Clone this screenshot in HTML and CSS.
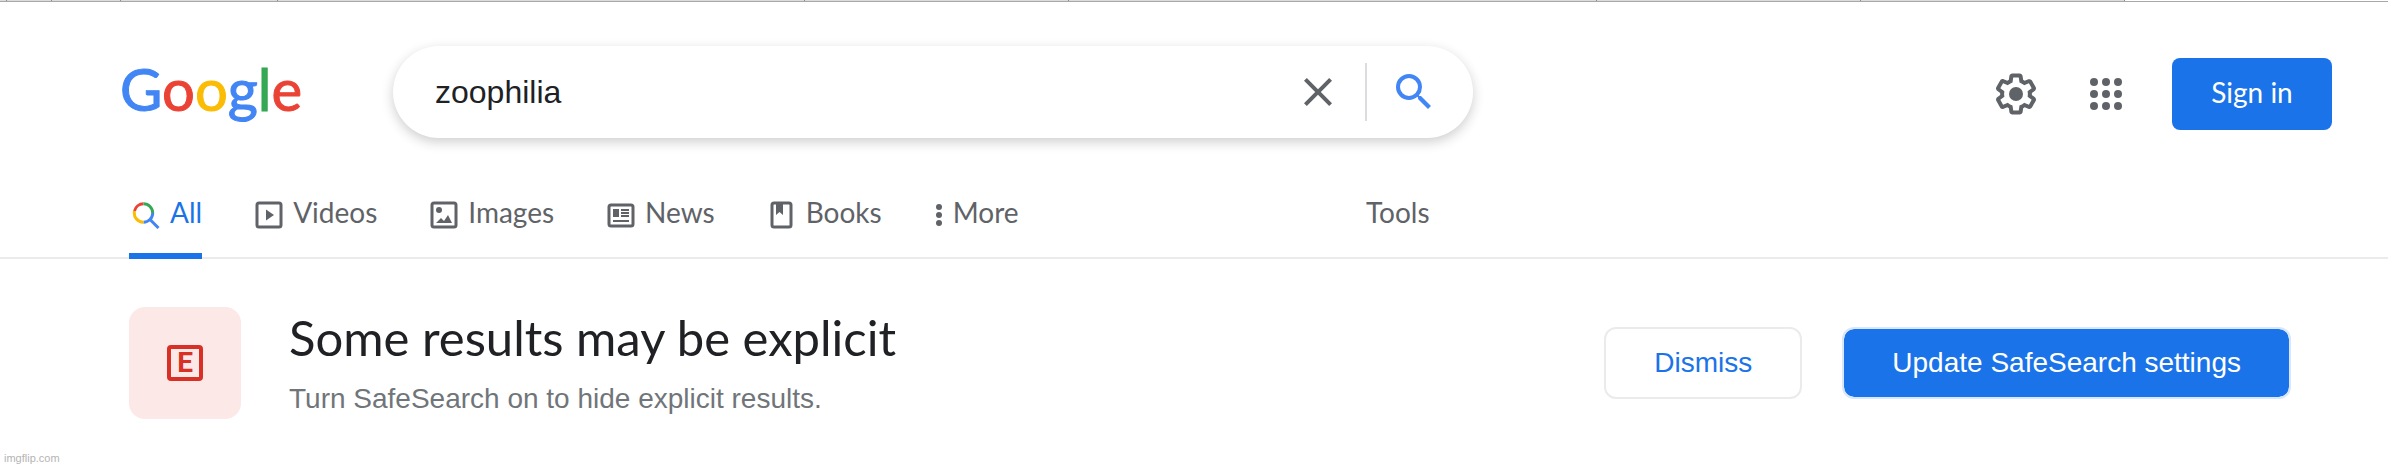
FILE: index.html
```html
<!DOCTYPE html>
<html lang="en">
<head>
  <meta charset="UTF-8">
  <meta name="viewport" content="width=device-width, initial-scale=1.0">
  <title>zoophilia - Google Search</title>
  <link rel="stylesheet" href="styles.css">
</head>
<body>
  <!-- Edge of the browser tab bar -->
  <div class="top-strip">
    <span class="slot tiny"></span>
    <span class="slot small"></span>
    <span class="slot medium"></span>
    <span class="slot large"></span>
    <span class="slot wide"></span>
    <span class="slot"></span>
    <span class="slot wide"></span>
    <span class="slot"></span>
    <span class="slot"></span>
    <span class="slot empty"></span>
  </div>

  <!-- Header: logo, search box, account -->
  <header class="header">
    <a class="logo" href="#" aria-label="Google"><span class="blue">G</span><span class="red">o</span><span class="yellow">o</span><span class="blue">g</span><span class="green">l</span><span class="red">e</span></a>

    <form class="search-box" role="search">
      <input class="search-input" type="text" aria-label="Search" value="zoophilia">
      <button class="icon-button" type="reset" aria-label="Clear">
        <svg viewBox="0 0 24 24"><path d="M19 6.41L17.59 5 12 10.59 6.41 5 5 6.41 10.59 12 5 17.59 6.41 19 12 13.41 17.59 19 19 17.59 13.41 12z"/></svg>
      </button>
      <span class="divider"></span>
      <button class="icon-button search-button" type="submit" aria-label="Search">
        <svg viewBox="0 0 24 24"><path d="M15.5 14h-.79l-.28-.27A6.47 6.47 0 0 0 16 9.5 6.5 6.5 0 1 0 9.5 16c1.61 0 3.09-.59 4.23-1.57l.27.28v.79l5 4.99L20.49 19l-4.99-5zm-6 0a4.5 4.5 0 1 1 0-9 4.5 4.5 0 0 1 0 9z"/></svg>
      </button>
    </form>

    <div class="account">
      <button class="icon-button" type="button" aria-label="Settings">
        <svg viewBox="0 0 24 24"><path d="M13.85 22.25h-3.7c-.74 0-1.36-.54-1.45-1.27l-.27-1.89c-.27-.14-.53-.29-.79-.46l-1.8.72c-.7.26-1.47-.03-1.81-.65L2.2 15.53c-.35-.66-.2-1.44.36-1.88l1.53-1.19c-.01-.15-.02-.3-.02-.46 0-.15.01-.31.02-.46l-1.52-1.19c-.59-.45-.74-1.26-.37-1.88l1.85-3.19c.34-.62 1.11-.9 1.79-.63l1.81.73c.26-.17.52-.32.78-.46l.27-1.91c.09-.7.71-1.25 1.44-1.25h3.7c.74 0 1.36.54 1.45 1.27l.27 1.89c.27.14.53.29.79.46l1.8-.72c.71-.26 1.48.03 1.82.65l1.84 3.18c.36.66.2 1.44-.36 1.88l-1.52 1.19c.01.15.02.3.02.46s-.01.31-.02.46l1.52 1.19c.56.45.72 1.23.37 1.86l-1.86 3.22c-.34.62-1.11.9-1.8.63l-1.8-.72c-.26.17-.52.32-.78.46l-.27 1.91c-.1.68-.72 1.22-1.46 1.22zm-3.23-2h2.76l.37-2.55.53-.22c.44-.18.88-.44 1.34-.78l.45-.34 2.38.96 1.38-2.4-2.03-1.58.07-.56c.03-.26.06-.51.06-.78s-.03-.53-.06-.78l-.07-.56 2.03-1.58-1.39-2.4-2.39.96-.45-.35c-.42-.32-.87-.58-1.33-.77l-.52-.22-.37-2.55h-2.76l-.37 2.55-.53.21c-.44.19-.88.44-1.34.79l-.45.33-2.38-.95-1.39 2.39 2.03 1.58-.07.56a7 7 0 0 0-.06.79c0 .26.02.53.06.78l.07.56-2.03 1.58 1.38 2.4 2.39-.96.45.35c.43.33.86.58 1.33.77l.53.22.38 2.55z"/><circle cx="12" cy="12" r="3.5"/></svg>
      </button>
      <button class="icon-button" type="button" aria-label="Google apps">
        <svg viewBox="0 0 24 24">
          <circle cx="6" cy="6" r="2"/><circle cx="12" cy="6" r="2"/><circle cx="18" cy="6" r="2"/>
          <circle cx="6" cy="12" r="2"/><circle cx="12" cy="12" r="2"/><circle cx="18" cy="12" r="2"/>
          <circle cx="6" cy="18" r="2"/><circle cx="12" cy="18" r="2"/><circle cx="18" cy="18" r="2"/>
        </svg>
      </button>
      <a class="sign-in" href="#">Sign in</a>
    </div>
  </header>

  <!-- Result type tabs -->
  <nav class="tabs">
    <div class="tab-list">
      <a class="tab active" href="#">
        <svg class="tab-icon outline" viewBox="0 0 28 28" stroke-width="3">
          <path stroke="#ea4335" d="M2.500 10 A9.200 9.200 0 0 1 11.500 2.800"/>
          <path stroke="#34a853" d="M11.500 2.800 A9.200 9.200 0 0 1 20.700 12"/>
          <path stroke="#4285f4" d="M20.700 12 A9.200 9.200 0 0 1 11.500 21.200 M17.500 18 L26.500 27"/>
          <path stroke="#fbbc04" d="M11.500 21.200 A9.200 9.200 0 0 1 2.500 10"/>
        </svg>
        All
      </a>
      <a class="tab" href="#">
        <svg class="tab-icon" viewBox="0 0 28 28"><rect x="2" y="2" width="24" height="24" rx="2" fill="none" stroke="currentColor" stroke-width="3"/><path d="M11 8.500v11l8-5.500z"/></svg>
        Videos
      </a>
      <a class="tab" href="#">
        <svg class="tab-icon" viewBox="0 0 28 28"><rect x="2" y="2" width="24" height="24" rx="2" fill="none" stroke="currentColor" stroke-width="3"/><circle cx="9" cy="9" r="3"/><path d="M6 22l5-5 3 3 4-6 4 8z"/></svg>
        Images
      </a>
      <a class="tab" href="#">
        <svg class="tab-icon" viewBox="0 0 28 28"><rect x="2" y="4" width="24" height="21" rx="2" fill="none" stroke="currentColor" stroke-width="3"/><path d="M6 8h6v8H6zM14 8h8v2h-8zM14 11h8v2h-8zM14 14h8v2h-8zM6 19h16v2H6z"/></svg>
        News
      </a>
      <a class="tab" href="#">
        <svg class="tab-icon" viewBox="0 0 28 28"><rect x="4" y="2" width="19" height="24" rx="2" fill="none" stroke="currentColor" stroke-width="3"/><path d="M8 2h7v12l-3.500-3L8 14z"/></svg>
        Books
      </a>
      <a class="tab" href="#">
        <svg class="tab-icon dots" viewBox="0 0 8 28"><circle cx="4" cy="6" r="3"/><circle cx="4" cy="14" r="3"/><circle cx="4" cy="22" r="3"/></svg>
        More
      </a>
    </div>
    <a class="tab" href="#">Tools</a>
  </nav>

  <!-- SafeSearch notice -->
  <main class="notice">
    <div class="notice-badge"><span class="explicit-icon">E</span></div>
    <div class="notice-text">
      <h1>Some results may be explicit</h1>
      <p>Turn SafeSearch on to hide explicit results.</p>
    </div>
    <div class="notice-actions">
      <button class="button" type="button">Dismiss</button>
      <button class="button primary" type="button">Update SafeSearch settings</button>
    </div>
  </main>

  <footer class="credit">imgflip.com</footer>
</body>
</html>
```
FILE: styles.css
```css
* {
  box-sizing: border-box;
}

body {
  margin: 0;
  background: #fff;
  color: #202124;
  font-family: "Liberation Sans", Arial, sans-serif;
  font-size: 28px;
}

a {
  text-decoration: none;
}

svg {
  display: block;
  fill: currentColor;
}

/* Strip above the page */
.top-strip {
  display: flex;
  height: 2px;
  border-bottom: 1px solid #a8a8a8;
}

.slot {
  flex: 264;
  border-right: 1px solid #8c8c8c;
  background: #dcdcdc;
}

.slot.tiny { flex: 6; }
.slot.small { flex: 44; }
.slot.medium { flex: 68; }
.slot.large { flex: 157; }
.slot.wide { flex: 528; }

.slot.empty {
  border: none;
  background: #fff;
}

/* Header */
.header {
  display: flex;
  align-items: center;
  padding: 44px 56px 0 120px;
}

.logo {
  width: 273px;
  padding-bottom: 6px;
  font-family: Lato, sans-serif;
  font-size: 58px;
  line-height: 80px;
  -webkit-text-stroke: 1px currentColor;
}

.blue { color: #4285f4; }
.red { color: #ea4335; }
.yellow { color: #fbbc05; }
.green { color: #34a853; }

.search-box {
  display: flex;
  align-items: center;
  gap: 23px;
  flex: 0 1 1080px;
  height: 92px;
  padding: 0 35px 0 42px;
  border-radius: 46px;
  background: #fff;
  box-shadow: 0 4px 12px rgba(32, 33, 36, 0.22);
}

.search-input {
  flex: 1;
  min-width: 0;
  padding: 0;
  border: none;
  outline: none;
  background: none;
  color: #202124;
  font-family: inherit;
  font-size: 32px;
}

.icon-button {
  width: 48px;
  height: 48px;
  padding: 0;
  border: none;
  background: none;
  color: #5f6368;
  cursor: pointer;
}

.search-button {
  color: #4285f4;
}

.divider {
  width: 2px;
  height: 58px;
  background: #dadce0;
}

.account {
  display: flex;
  align-items: center;
  gap: 42px;
  margin: 4px 0 0 auto;
}

.sign-in {
  width: 160px;
  padding-bottom: 4px;
  border-radius: 8px;
  background: #1a73e8;
  color: #fff;
  font-family: Lato, sans-serif;
  line-height: 68px;
  text-align: center;
}

/* Tabs */
.tabs {
  display: flex;
  padding: 43px 0 0 129px;
  border-bottom: 2px solid #ebebeb;
}

.tab-list {
  display: flex;
  gap: 50px;
  width: 1234px;
}

.tab {
  display: flex;
  align-items: center;
  gap: 10px;
  height: 78px;
  margin-bottom: -2px;
  padding: 0 0 10px 3px;
  border-bottom: 6px solid transparent;
  color: #5f6368;
  font-family: Lato, sans-serif;
}

.tab.active {
  border-color: #1a73e8;
  color: #1a73e8;
}

.tab-icon {
  width: 28px;
  height: 28px;
  margin-top: 5px;
}

.tab-icon.outline {
  fill: none;
}

.tab-icon.dots {
  width: 8px;
}

/* SafeSearch notice */
.notice {
  display: flex;
  align-items: center;
  padding: 48px 97px 0 129px;
}

.notice-badge {
  display: flex;
  align-items: center;
  justify-content: center;
  width: 112px;
  height: 112px;
  border-radius: 16px;
  background: #fce8e6;
}

.explicit-icon {
  width: 36px;
  height: 36px;
  border: 4px solid #d93025;
  border-radius: 4px;
  color: #d93025;
  font-family: Roboto, sans-serif;
  font-weight: 700;
  line-height: 28px;
  text-align: center;
}

.notice-text {
  margin-left: 48px;
}

.notice-text h1 {
  margin: 0;
  font-family: Lato, sans-serif;
  font-size: 49px;
  font-weight: 400;
  line-height: 60px;
}

.notice-text p {
  margin: 12px 0 0;
  color: #70757a;
  line-height: 40px;
}

.notice-actions {
  display: flex;
  gap: 40px;
  margin-left: auto;
}

.button {
  height: 72px;
  padding: 0 48px;
  border: 2px solid #ebebeb;
  border-radius: 12px;
  background: #fff;
  color: #1a73e8;
  font-family: inherit;
  font-size: 28px;
  cursor: pointer;
}

.button.primary {
  border-color: #d8e7fb;
  background: #1a73e8;
  background-clip: padding-box;
  color: #fff;
}

.credit {
  padding: 31px 4px 0;
  color: #b4b4b4;
  font-size: 11px;
  line-height: 16px;
}
```
